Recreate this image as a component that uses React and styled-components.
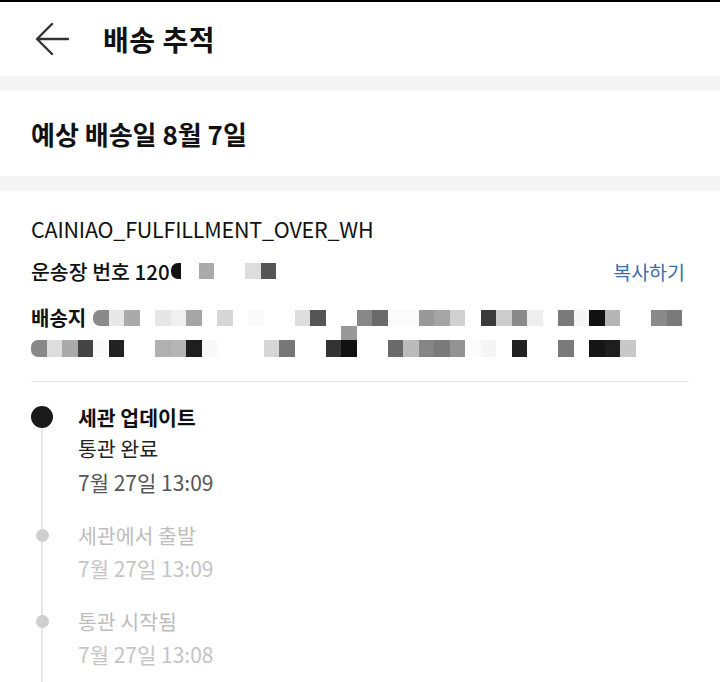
import React from 'react';
import styled, {createGlobalStyle} from 'styled-components';

const GlobalStyle = createGlobalStyle`
  html, body {
    margin: 0;
    padding: 0;
    background: #fff;
  }
  body {
    font-family: "Noto Sans CJK KR", "Noto Sans", sans-serif;
    color: #111;
  }
`;

const Page = styled.div`
  width: 720px;
  overflow: hidden;
`;

const Header = styled.header`
  display: flex;
  align-items: center;
  height: 74px;
  padding-left: 35px;
  border-top: 2px solid #000;
`;

const BackButton = styled.button`
  display: flex;
  padding: 0;
  border: 0;
  background: none;
  margin-right: 34px;
`;

const Title = styled.h1`
  margin: 0;
  font-size: 28px;
  font-weight: 700;
  line-height: 1;
  letter-spacing: 0.5px;
`;

const Band = styled.div`
  height: 15px;
  background: #f4f4f4;
`;

const EtaSection = styled.section`
  display: flex;
  align-items: center;
  height: 85px;
  padding: 0 31px;
  font-size: 26px;
  font-weight: 700;
`;

const Detail = styled.section`
  padding: 23px 31px 0;
`;

const Carrier = styled.div`
  font-size: 21.5px;
  line-height: 30px;
  color: #111;
  letter-spacing: -0.2px;
`;

const TrackRow = styled.div`
  display: flex;
  align-items: center;
  justify-content: space-between;
  margin-top: 12px;
  height: 30px;
`;

const TrackLabel = styled.div`
  display: flex;
  align-items: center;
  font-size: 20.5px;
  font-weight: 500;
`;

const CopyLink = styled.a`
  color: #3b6fa8;
  font-size: 19.5px;
  text-decoration: none;
  margin-right: 4px;
`;

const InlineMosaic = styled.span`
  display: inline-grid;
  grid-template-columns: 10px 18px 15.5px 15.5px 15.5px 15.5px 15.5px;
  height: 16px;
  margin-left: 1px;
`;

const Address = styled.div`
  display: grid;
  grid-template-columns: repeat(42, 15.5px);
  grid-template-rows: 16px 14px 17px;
  margin-top: 24px;
`;

const AddressLabel = styled.div`
  grid-column: 1 / 5;
  grid-row: 1;
  font-size: 20px;
  font-weight: 700;
  line-height: 16px;
`;

const Cell = styled.span`
  grid-column: ${p => p.$col};
  grid-row: ${p => p.$row};
  background: ${p => p.$c};
  border-radius: ${p => (p.$round ? '7px 0 0 7px' : '0')};
`;

const Divider = styled.hr`
  margin: 24px 0 0;
  border: 0;
  border-top: 1px solid #e2e2e2;
`;

const Timeline = styled.ol`
  position: relative;
  list-style: none;
  margin: 0;
  padding: 20px 31px 0;

  &::before {
    content: '';
    position: absolute;
    left: 41px;
    top: 35px;
    bottom: -40px;
    width: 2px;
    background: #e6e6e6;
  }
`;

const Step = styled.li`
  position: relative;
  display: flex;
  gap: 25px;
  margin-bottom: 20px;
`;

const DotCol = styled.div`
  display: flex;
  justify-content: center;
  align-items: center;
  width: 22px;
  height: 30px;
  flex-shrink: 0;
`;

const Dot = styled.span`
  width: ${p => (p.$active ? '22px' : '13px')};
  height: ${p => (p.$active ? '22px' : '13px')};
  border-radius: 50%;
  background: ${p => (p.$active ? '#1a1a1a' : '#cfcfcf')};
`;

const StepBody = styled.div`
  display: flex;
  flex-direction: column;
`;

const StepTitle = styled.div`
  font-size: 20.5px;
  line-height: 30px;
  font-weight: ${p => (p.$active ? 700 : 400)};
  color: ${p => (p.$active ? '#111' : '#bdbdbd')};
`;

const StepDesc = styled.div`
  font-size: 20.5px;
  line-height: 32px;
  color: #222;
`;

const StepTime = styled.div`
  font-size: 21px;
  line-height: 36px;
  color: ${p => (p.$active ? '#555' : '#c4c4c4')};
`;

const trackCells = ['#111', null, '#aaa', null, null, '#ddd', '#555'];

const addressRow1 = [
  '#8a8a8a', '#e8e8e8', '#aaa', null, '#e6e6e6', '#f0f0f0', '#a5a5a5', null,
  '#d6d6d6', null, '#fafafa', null, null, '#ddd', '#555', null, null, '#888',
  '#6a6a6a', '#fcfcfc', '#fcfcfc', '#999', '#a5a5a5', '#d0d0d0', null,
  '#3a3a3a', '#ccc', '#8a8a8a', '#eee', null, '#7a7a7a', '#f5f5f5', '#111',
  '#b5b5b5', null, null, '#8a8a8a', '#7a7a7a',
];

const addressRow2 = [
  '#888', '#ddd', '#aaa', '#444', '#fafafa', '#222', null, null, '#b0b0b0',
  '#b5b5b5', '#1e1e1e', '#f8f8f8', null, null, null, '#d6d6d6', '#777', null,
  null, '#333', '#111', null, null, '#6a6a6a', '#bbb', '#858585', '#7a7a7a',
  '#939393', '#fcfcfc', '#f5f5f5', null, '#222', null, null, '#7a7a7a', null,
  '#151515', '#1e1e1e', '#c8c8c8',
];

const steps = [
  {title: '세관 업데이트', desc: '통관 완료', time: '7월 27일 13:09', active: true},
  {title: '세관에서 출발', time: '7월 27일 13:09'},
  {title: '통관 시작됨', time: '7월 27일 13:08'},
];

const BackArrow = () => (
  <svg width="34" height="34" viewBox="0 0 34 34" fill="none">
    <path
      d="M33 17H3M17 2L2 17L17 32"
      stroke="#333"
      strokeWidth="2.4"
      strokeLinecap="round"
      strokeLinejoin="round"
    />
  </svg>
);

export default function App() {
  return (
    <Page>
      <GlobalStyle />
      <Header>
        <BackButton aria-label="back">
          <BackArrow />
        </BackButton>
        <Title>배송 추적</Title>
      </Header>
      <Band />
      <EtaSection>예상 배송일 8월 7일</EtaSection>
      <Band />
      <Detail>
        <Carrier>CAINIAO_FULFILLMENT_OVER_WH</Carrier>
        <TrackRow>
          <TrackLabel>
            운송장 번호 120
            <InlineMosaic>
              {trackCells.map((c, i) =>
                c ? <Cell key={i} $col={i + 1} $row={1} $c={c} $round={i === 0} /> : null,
              )}
            </InlineMosaic>
          </TrackLabel>
          <CopyLink href="#">복사하기</CopyLink>
        </TrackRow>
        <Address>
          <AddressLabel>배송지</AddressLabel>
          {addressRow1.map((c, i) =>
            c ? <Cell key={'a' + i} $col={i + 5} $row={1} $c={c} $round={i === 0} /> : null,
          )}
          <Cell $col={21} $row={2} $c="#999" />
          {addressRow2.map((c, i) =>
            c ? <Cell key={'b' + i} $col={i + 1} $row={3} $c={c} $round={i === 0} /> : null,
          )}
        </Address>
        <Divider />
      </Detail>
      <Timeline>
        {steps.map(s => (
          <Step key={s.title}>
            <DotCol>
              <Dot $active={s.active} />
            </DotCol>
            <StepBody>
              <StepTitle $active={s.active}>{s.title}</StepTitle>
              {s.desc && <StepDesc>{s.desc}</StepDesc>}
              <StepTime $active={s.active}>{s.time}</StepTime>
            </StepBody>
          </Step>
        ))}
      </Timeline>
    </Page>
  );
}
